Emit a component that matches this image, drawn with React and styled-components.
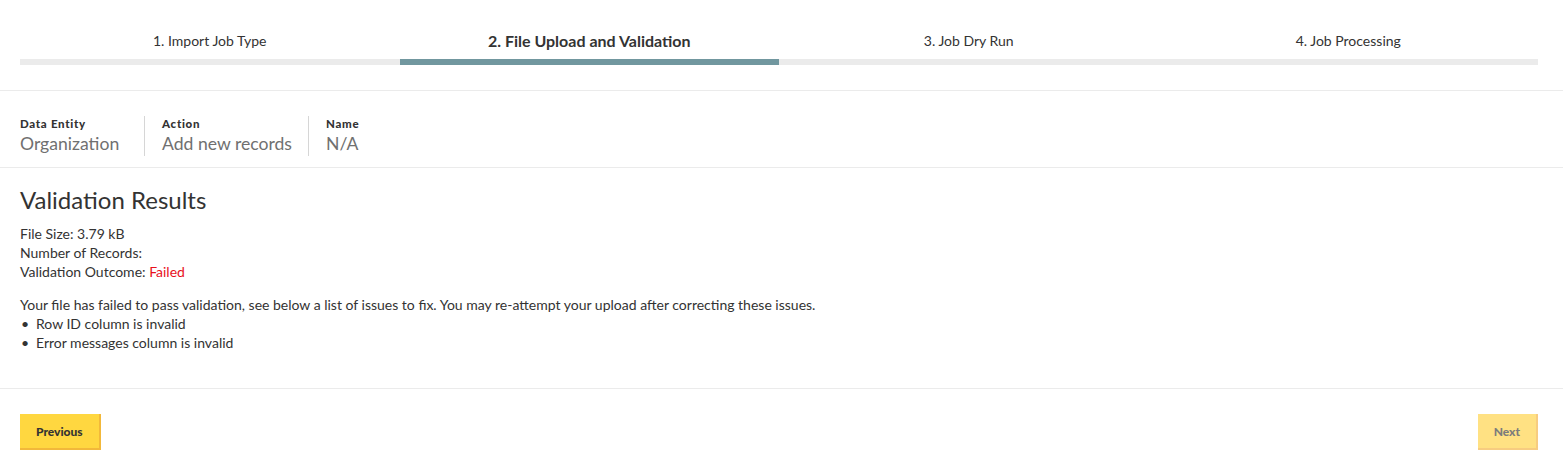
import React from "react";
import styled, { createGlobalStyle } from "styled-components";

const Global = createGlobalStyle`
  html, body { margin: 0; padding: 0; background: #fff; }
  body { font-family: "Lato", "Helvetica Neue", Arial, sans-serif; color: #333; }
  * { box-sizing: border-box; }
`;

const Page = styled.div`
  width: 1563px;
  height: 472px;
  background: #fff;
`;

const Stepper = styled.div`
  display: flex;
  padding: 28px 25px 25px 20px;
  border-bottom: 1px solid #ebebeb;
`;

const Step = styled.div`
  flex: 1;
  display: flex;
  flex-direction: column;
  align-items: center;
`;

const StepLabel = styled.div`
  height: 24px;
  display: flex;
  align-items: center;
  font-size: ${(p) => (p.$active ? "16px" : "14px")};
  font-weight: ${(p) => (p.$active ? 700 : 400)};
  color: #333;
  margin-bottom: 7px;
`;

const StepBar = styled.div`
  width: 100%;
  height: 6px;
  background: ${(p) => (p.$active ? "#71979f" : "#ebebeb")};
`;

const InfoRow = styled.div`
  display: flex;
  padding: 25px 20px 11px;
  border-bottom: 1px solid #ebebeb;
`;

const InfoItem = styled.div`
  display: flex;
  flex-direction: column;
  height: 40px;
  min-width: ${(p) => (p.$first ? "124px" : "0")};
  padding: 0 16px 0 ${(p) => (p.$first ? "0" : "17px")};
  border-left: ${(p) => (p.$first ? "none" : "1px solid #d6d6d6")};
`;

const InfoLabel = styled.div`
  font-size: 11.5px;
  font-weight: 900;
  letter-spacing: 0.7px;
  color: #333;
  line-height: 16px;
`;

const InfoValue = styled.div`
  font-size: 17.6px;
  color: #707070;
  line-height: 24px;
`;

const Content = styled.div`
  padding: 17px 20px 36px;
  border-bottom: 1px solid #ebebeb;
`;

const Heading = styled.h2`
  margin: 0 0 9px;
  font-size: 24px;
  font-weight: 400;
  line-height: 30px;
  color: #333;
`;

const Line = styled.div`
  font-size: 14px;
  line-height: 19px;
  color: #333;
`;

const Failed = styled.span`
  color: #e8101d;
`;

const Paragraph = styled.p`
  margin: 14px 0 0;
  font-size: 14px;
  line-height: 19px;
`;

const List = styled.ul`
  margin: 0;
  padding: 0;
  list-style: none;
`;

const Item = styled.li`
  font-size: 14px;
  line-height: 19px;
  display: flex;
  &::before {
    content: "•";
    width: 15px;
    padding-left: 1px;
  }
`;

const Footer = styled.div`
  display: flex;
  justify-content: space-between;
  padding: 25px 25px 0 20px;
`;

const Button = styled.button`
  height: 36px;
  padding: 0 ${(p) => p.$px || 16}px;
  border: none;
  border-right: 2px solid ${(p) => (p.disabled ? "#f7cc80" : "#f2b83a")};
  border-bottom: 2px solid ${(p) => (p.disabled ? "#f7cc80" : "#f2b83a")};
  background: ${(p) => (p.disabled ? "#ffe183" : "#ffd740")};
  color: ${(p) => (p.disabled ? "#7c7c7c" : "#333")};
  font-family: inherit;
  font-size: 12px;
  font-weight: 900;
  cursor: pointer;
`;

const steps = [
  "1. Import Job Type",
  "2. File Upload and Validation",
  "3. Job Dry Run",
  "4. Job Processing",
];

export default function App() {
  return (
    <Page>
      <Global />
      <Stepper>
        {steps.map((s, i) => (
          <Step key={s}>
            <StepLabel $active={i === 1}>{s}</StepLabel>
            <StepBar $active={i === 1} />
          </Step>
        ))}
      </Stepper>
      <InfoRow>
        <InfoItem $first>
          <InfoLabel>Data Entity</InfoLabel>
          <InfoValue>Organization</InfoValue>
        </InfoItem>
        <InfoItem>
          <InfoLabel>Action</InfoLabel>
          <InfoValue>Add new records</InfoValue>
        </InfoItem>
        <InfoItem>
          <InfoLabel>Name</InfoLabel>
          <InfoValue>N/A</InfoValue>
        </InfoItem>
      </InfoRow>
      <Content>
        <Heading>Validation Results</Heading>
        <Line>File Size: 3.79 kB</Line>
        <Line>Number of Records:</Line>
        <Line>
          Validation Outcome: <Failed>Failed</Failed>
        </Line>
        <Paragraph>
          Your file has failed to pass validation, see below a list of issues to fix. You may
          re-attempt your upload after correcting these issues.
        </Paragraph>
        <List>
          <Item>Row ID column is invalid</Item>
          <Item>Error messages column is invalid</Item>
        </List>
      </Content>
      <Footer>
        <Button $px={16}>Previous</Button>
        <Button disabled $px={16}>Next</Button>
      </Footer>
    </Page>
  );
}
